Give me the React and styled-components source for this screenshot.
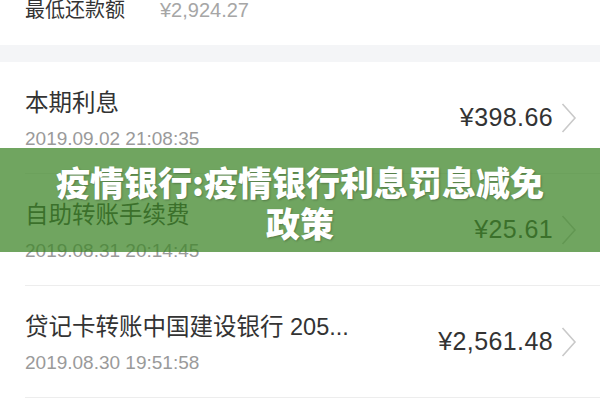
import React from 'react'
import styled, { createGlobalStyle } from 'styled-components'

const GlobalStyle = createGlobalStyle`
  body {
    margin: 0;
    background: #fff;
    font-family: "Liberation Sans", "Noto Sans CJK SC", sans-serif;
  }
`

const Page = styled.div`
  position: relative;
  width: 600px;
  height: 400px;
  overflow: hidden;
  background: #fff;
`

const SummaryRow = styled.div`
  display: flex;
  align-items: flex-start;
  height: 45px;
  padding-left: 25px;
  font-size: 20px;
  line-height: 20px;
`

const SummaryLabel = styled.div`
  width: 135px;
  color: #333;
`

const SummaryValue = styled.div`
  color: #a6a6a6;
`

const Divider = styled.div`
  height: 17px;
  background: #f4f5f7;
`

const Row = styled.div`
  box-sizing: border-box;
  display: flex;
  justify-content: space-between;
  height: 112px;
  margin-left: 25px;
  padding-right: 23px;
  border-bottom: 1px solid #ededed;
`

const Info = styled.div`
  padding-top: 26px;
`

const Title = styled.div`
  font-size: 23.5px;
  line-height: 30px;
  color: #333;
  white-space: nowrap;
`

const Time = styled.div`
  margin-top: 6px;
  font-size: 19px;
  line-height: 30px;
  color: #9a9a9a;
`

const Side = styled.div`
  display: flex;
  align-items: center;
  gap: 8px;
`

const Amount = styled.div`
  font-size: 25px;
  letter-spacing: 0.4px;
  color: #333;
`

const Banner = styled.div`
  position: absolute;
  top: 148px;
  left: 0;
  right: 0;
  height: 104px;
  display: flex;
  align-items: center;
  justify-content: center;
  background: rgba(62, 134, 40, 0.74);
`

const Headline = styled.h1`
  margin: 0;
  padding-top: 4px;
  font-family: "Noto Sans CJK SC", sans-serif;
  font-size: 34px;
  font-weight: 900;
  line-height: 41px;
  text-align: center;
  color: #fff;
  text-shadow: 1px 1px 2px rgba(0, 0, 0, 0.25);
`

const Chevron = () => (
  <svg width="16" height="30" viewBox="0 0 16 30">
    <polyline points="1.5,1 14,15 1.5,29" fill="none" stroke="#c9c9c9" strokeWidth="1.6" />
  </svg>
)

const records = [
  { id: 1, title: '本期利息', time: '2019.09.02 21:08:35', amount: '¥398.66' },
  { id: 2, title: '自助转账手续费', time: '2019.08.31 20:14:45', amount: '¥25.61' },
  { id: 3, title: '贷记卡转账中国建设银行 205...', time: '2019.08.30 19:51:58', amount: '¥2,561.48' }
]

const App = () => (
  <Page>
    <GlobalStyle />
    <SummaryRow>
      <SummaryLabel>最低还款额</SummaryLabel>
      <SummaryValue>¥2,924.27</SummaryValue>
    </SummaryRow>
    <Divider />
    {records.map(item => (
      <Row key={item.id}>
        <Info>
          <Title>{item.title}</Title>
          <Time>{item.time}</Time>
        </Info>
        <Side>
          <Amount>{item.amount}</Amount>
          <Chevron />
        </Side>
      </Row>
    ))}
    <Banner>
      <Headline>疫情银行:疫情银行利息罚息减免<br />政策</Headline>
    </Banner>
  </Page>
)

export default App
